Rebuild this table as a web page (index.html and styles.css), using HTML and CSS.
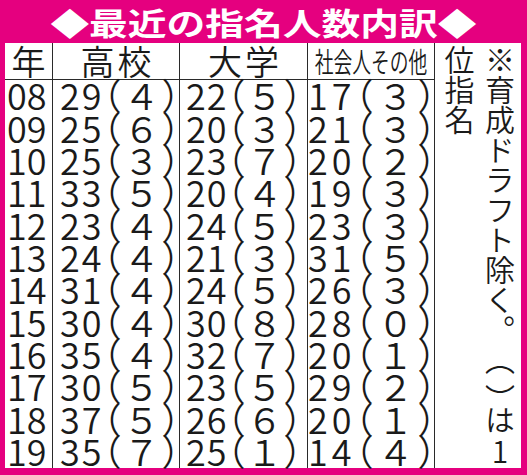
FILE: index.html
```html
<!DOCTYPE html>
<html lang="ja">
<head>
<meta charset="utf-8">
<title>最近の指名人数内訳</title>
<link rel="stylesheet" href="styles.css">
</head>
<body>
<div class="page">
  <h1 class="title"><span class="title-text">◆最近の指名人数内訳◆</span></h1>
  <div class="table">
    <div class="cell head">年</div>
    <div class="cell head spaced">高校</div>
    <div class="cell head spaced">大学</div>
    <div class="cell head"><span class="narrow">社会人その他</span></div>
    <div class="note">※育成ドラフト除く。<span class="open">（</span><span class="close">）</span>は<span class="upright">1</span><br>位指名</div>

    <div class="cell year">08</div><div class="cell num c2">29（４）</div><div class="cell num c3">22（５）</div><div class="cell num c4">17（３）</div>
    <div class="cell year">09</div><div class="cell num c2">25（６）</div><div class="cell num c3">20（３）</div><div class="cell num c4">21（３）</div>
    <div class="cell year">10</div><div class="cell num c2">25（３）</div><div class="cell num c3">23（７）</div><div class="cell num c4">20（２）</div>
    <div class="cell year">11</div><div class="cell num c2">33（５）</div><div class="cell num c3">20（４）</div><div class="cell num c4">19（３）</div>
    <div class="cell year">12</div><div class="cell num c2">23（４）</div><div class="cell num c3">24（５）</div><div class="cell num c4">23（３）</div>
    <div class="cell year">13</div><div class="cell num c2">24（４）</div><div class="cell num c3">21（３）</div><div class="cell num c4">31（５）</div>
    <div class="cell year">14</div><div class="cell num c2">31（４）</div><div class="cell num c3">24（５）</div><div class="cell num c4">26（３）</div>
    <div class="cell year">15</div><div class="cell num c2">30（４）</div><div class="cell num c3">30（８）</div><div class="cell num c4">28（０）</div>
    <div class="cell year">16</div><div class="cell num c2">35（４）</div><div class="cell num c3">32（７）</div><div class="cell num c4">20（１）</div>
    <div class="cell year">17</div><div class="cell num c2">30（５）</div><div class="cell num c3">23（５）</div><div class="cell num c4">29（２）</div>
    <div class="cell year">18</div><div class="cell num c2">37（５）</div><div class="cell num c3">26（６）</div><div class="cell num c4">20（１）</div>
    <div class="cell year">19</div><div class="cell num c2">35（７）</div><div class="cell num c3">25（１）</div><div class="cell num c4">14（４）</div>
  </div>
</div>
</body>
</html>
```
FILE: styles.css
```css
html, body {
  margin: 0;
  padding: 0;
  background: #e5007f;
}
.page {
  width: 527px;
  height: 475px;
  background: #e5007f;
  font-family: "Noto Sans CJK JP", "Noto Sans", sans-serif;
  color: #1a1a1a;
  display: flex;
  flex-direction: column;
}
.title {
  margin: 0;
  height: 43px;
  flex: none;
  display: flex;
  align-items: center;
  justify-content: center;
  color: #fff;
  font-size: 31px;
  font-weight: 700;
  line-height: 1;
  white-space: nowrap;
}
.title-text {
  display: inline-block;
  transform: scaleX(1.25);
}
.table {
  margin: 0 6px 0 5px;
  height: 425px;
  flex: none;
  background: #fff;
  display: grid;
  grid-template-columns: 48px 127px 128px 127px 86px;
  grid-template-rows: 37px repeat(12, minmax(0, 1fr));
  font-weight: 350;
}
.cell {
  border-right: 1.5px solid #2a2a2a;
  display: flex;
  align-items: center;
  white-space: nowrap;
  line-height: 0.86;
  min-height: 0;
}
.head {
  border-bottom: 1.5px solid #2a2a2a;
  justify-content: center;
  font-size: 34px;
}
.spaced {
  letter-spacing: 3px;
  padding-left: 3px;
}
.narrow {
  display: inline-block;
  font-size: 28px;
  transform: scaleX(0.67);
}
.year {
  font-size: 36px;
  padding-left: 2px;
  padding-bottom: 3px;
}
.num {
  font-size: 36px;
  font-feature-settings: "halt";
  padding-bottom: 3px;
}
.c2 { padding-left: 7px; letter-spacing: 2px; }
.c3 { padding-left: 6px; letter-spacing: 1px; }
.c4 { padding-left: 0; letter-spacing: 4px; }
.note {
  grid-column: 5;
  grid-row: 1 / span 13;
  writing-mode: vertical-rl;
  text-spacing-trim: space-all;
  font-size: 30px;
  line-height: 40.5px;
  padding-top: 2px;
  padding-right: 1px;
  white-space: nowrap;
  min-height: 0;
}
.open {
  letter-spacing: 9px;
}
.close {
  letter-spacing: -9px;
}
.upright {
  text-combine-upright: all;
}
```
